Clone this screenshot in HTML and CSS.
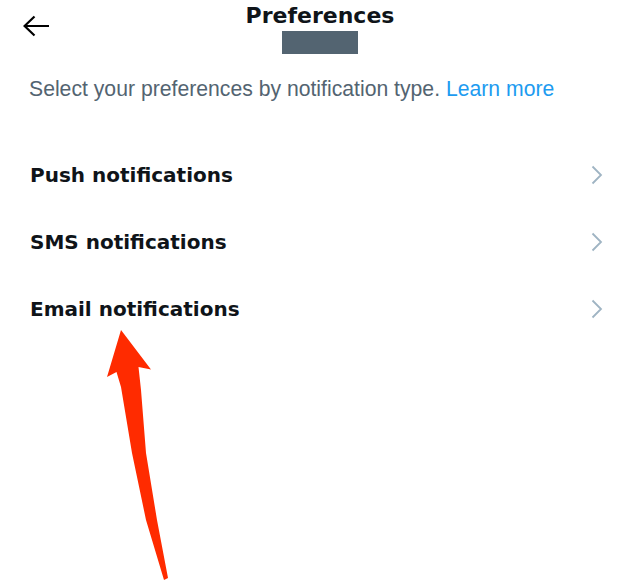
FILE: index.html
```html
<!DOCTYPE html>
<html lang="en">
<head>
<meta charset="utf-8">
<title>Preferences</title>
<link rel="stylesheet" href="styles.css">
</head>
<body>
<div class="page">
  <header class="topbar">
    <button class="back" aria-label="Back">
      <svg width="28" height="24" viewBox="0 0 28 24"><path d="M2 12 H27 M12.5 2.5 L2.6 12 L12.5 21.5" fill="none" stroke="#000" stroke-width="2.2"/></svg>
    </button>
    <div class="title-wrap">
      <h1 class="title">Preferences</h1>
      <div class="redacted"></div>
    </div>
    <div class="spacer"></div>
  </header>
  <p class="intro">Select your preferences by notification type. <a class="link" href="#">Learn more</a></p>
  <ul class="list">
    <li class="row"><span class="label">Push notifications</span><svg class="chev" width="12" height="20" viewBox="0 0 12 20"><path d="M1.5 1.5 L10 10 L1.5 18.5" fill="none" stroke="#9fb4c3" stroke-width="1.8"/></svg></li>
    <li class="row"><span class="label">SMS notifications</span><svg class="chev" width="12" height="20" viewBox="0 0 12 20"><path d="M1.5 1.5 L10 10 L1.5 18.5" fill="none" stroke="#9fb4c3" stroke-width="1.8"/></svg></li>
    <li class="row"><span class="label">Email notifications</span><svg class="chev" width="12" height="20" viewBox="0 0 12 20"><path d="M1.5 1.5 L10 10 L1.5 18.5" fill="none" stroke="#9fb4c3" stroke-width="1.8"/></svg></li>
  </ul>
  <svg class="annotation" width="640" height="588" viewBox="0 0 640 588">
    <polygon points="121,330 151,369.5 138.5,367 141,390 146,453 157,520 168,578 164,580 146,520 132,453 121,387 116.5,372 107,377" fill="#ff2b00"/>
  </svg>
</div>
</body>
</html>
```
FILE: styles.css
```css
* { box-sizing: border-box; }
html, body { margin: 0; padding: 0; background: #fff; }
body { font-family: "Liberation Sans", Arial, sans-serif; color: #0f1419; }
.page { position: relative; width: 640px; height: 588px; overflow: hidden; }
.topbar {
  display: grid;
  grid-template-columns: 1fr auto 1fr;
  align-items: start;
}
.back {
  justify-self: start;
  margin: 14px 0 0 22px;
  padding: 0;
  border: 0;
  background: none;
  width: 28px;
  height: 24px;
  display: block;
}
.back svg { display: block; }
.title-wrap { display: flex; flex-direction: column; align-items: center; padding-top: 3px; }
.title {
  margin: 0;
  font-family: "DejaVu Sans", sans-serif;
  font-weight: 700;
  font-size: 22px;
  line-height: 26px;
  color: #0f1419;
}
.redacted { width: 76px; height: 23px; margin-top: 2px; background: #536471; }
.intro {
  margin: 23px 0 0;
  padding-left: 29px;
  font-size: 21.2px;
  line-height: 24px;
  color: #536471;
}
.link { color: #1d9bf0; text-decoration: none; }
.list { list-style: none; margin: 40px 0 0; padding: 0; }
.row {
  height: 67px;
  display: flex;
  align-items: center;
  justify-content: space-between;
  padding: 0 37px 0 30px;
}
.label {
  font-family: "DejaVu Sans", sans-serif;
  font-weight: 700;
  font-size: 20px;
  line-height: 24px;
  color: #0f1419;
}
.chev { display: block; }
.annotation { position: absolute; left: 0; top: 0; pointer-events: none; }
```
